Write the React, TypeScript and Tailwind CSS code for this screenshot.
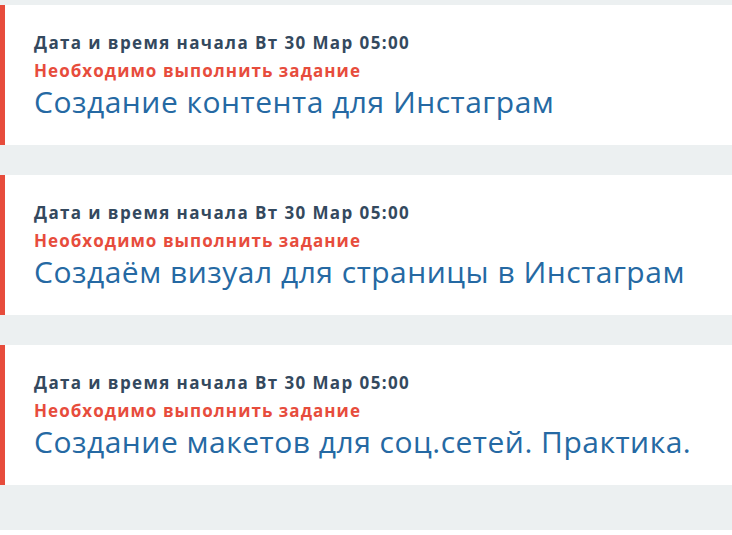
const tasks = [
  { date: 'Вт 30 Мар 05:00', title: 'Создание контента для Инстаграм' },
  { date: 'Вт 30 Мар 05:00', title: 'Создаём визуал для страницы в Инстаграм' },
  { date: 'Вт 30 Мар 05:00', title: 'Создание макетов для соц.сетей. Практика.' },
];

function TaskCard({ date, title }: { date: string; title: string }) {
  return (
    <div className="h-[140px] border-l-[5px] border-[#e74c3c] bg-white pl-[29px] pt-[24px]">
      <div className="text-[17px] leading-[28px] font-bold tracking-[1.4px] text-[#34495e]">
        Дата и время начала {date}
      </div>
      <div className="text-[17px] leading-[27px] font-bold tracking-[1.05px] text-[#e74c3c]">
        Необходимо выполнить задание
      </div>
      <div className="text-[30px] leading-[36px] tracking-[0.5px] text-[#2569a3]">{title}</div>
    </div>
  );
}

export default function App() {
  return (
    <div className="min-h-screen bg-white font-['Open_Sans',sans-serif]">
      <div className="flex flex-col gap-[30px] bg-[#ecf0f1] pt-[5px] pb-[45px]">
        {tasks.map((t, i) => (
          <TaskCard key={i} date={t.date} title={t.title} />
        ))}
      </div>
    </div>
  );
}
